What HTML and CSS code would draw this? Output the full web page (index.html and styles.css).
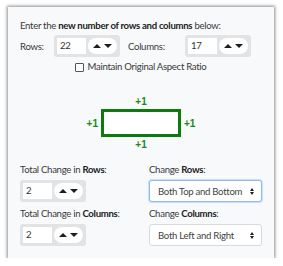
FILE: index.html
```html
<!DOCTYPE html>
<html>
<head>
<meta charset="utf-8">
<link rel="stylesheet" href="styles.css">
</head>
<body>
<div class="panel">
  <div class="intro">Enter the <b>new number of rows and columns</b> below:</div>
  <div class="dims">
    <span class="lbl lbl-rows">Rows:</span>
    <div class="spin">
      <span class="num">22</span>
      <span class="pill"><span class="up"></span><span class="down"></span></span>
    </div>
    <span class="lbl lbl-cols">Columns:</span>
    <div class="spin">
      <span class="num">17</span>
      <span class="pill"><span class="up"></span><span class="down"></span></span>
    </div>
  </div>
  <div class="aspect"><span class="cb"></span>Maintain Original Aspect Ratio</div>
  <div class="diagram">
    <div class="plus">+1</div>
    <div class="mid">
      <span class="plus">+1</span>
      <div class="rect"></div>
      <span class="plus">+1</span>
    </div>
    <div class="plus">+1</div>
  </div>
  <div class="grid">
    <div class="cell">
      <div class="glabel">Total Change in <b>Rows</b>:</div>
      <div class="spin">
        <span class="num">2</span>
        <span class="pill"><span class="up"></span><span class="down"></span></span>
      </div>
    </div>
    <div class="cell">
      <div class="glabel">Change <b>Rows</b>:</div>
      <div class="select focus"><span>Both Top and Bottom</span><span class="arr"><span class="up"></span><span class="down"></span></span></div>
    </div>
    <div class="cell">
      <div class="glabel">Total Change in <b>Columns</b>:</div>
      <div class="spin">
        <span class="num">2</span>
        <span class="pill"><span class="up"></span><span class="down"></span></span>
      </div>
    </div>
    <div class="cell">
      <div class="glabel">Change <b>Columns</b>:</div>
      <div class="select"><span>Both Left and Right</span><span class="arr"><span class="up"></span><span class="down"></span></span></div>
    </div>
  </div>
</div>
</body>
</html>
```
FILE: styles.css
```css
* { box-sizing: border-box; }
body {
  margin: 0;
  background: #ffffff;
  font-family: Lato, "Noto Sans", sans-serif;
  color: #3a3a3a;
}
.panel {
  margin: 7px 0 0 8px;
  width: 266px;
  height: 251px;
  background: #f8f9fa;
  box-shadow: 0 0 3px 1px rgba(0,0,0,0.45);
  padding: 12px 12px 0 12px;
  font-size: 9.6px;
  letter-spacing: -0.3px;
}
.intro {
  line-height: 14px;
  white-space: nowrap;
}
.intro b { font-weight: 700; color: #222; }
.dims {
  display: flex;
  align-items: center;
  margin-top: 2px;
}
.lbl-rows { width: 34px; }
.lbl-cols { width: 57px; margin-left: 8px; }
.spin {
  display: flex;
  align-items: center;
  gap: 2px;
  width: 66px;
  height: 22px;
  padding: 3px;
  background: #e2e3e4;
  border-radius: 3px;
}
.num {
  width: 29px;
  height: 16px;
  background: #fff;
  line-height: 16px;
  padding-left: 3px;
  color: #333;
}
.pill {
  width: 29px;
  height: 16px;
  background: #fff;
  border-radius: 8px;
  display: flex;
  align-items: center;
  justify-content: center;
  gap: 3px;
}
.up {
  width: 0; height: 0;
  border-left: 4px solid transparent;
  border-right: 4px solid transparent;
  border-bottom: 4px solid #1e1e1e;
}
.down {
  width: 0; height: 0;
  border-left: 4px solid transparent;
  border-right: 4px solid transparent;
  border-top: 4px solid #1e1e1e;
}
.aspect {
  display: flex;
  align-items: center;
  justify-content: center;
  margin-top: 3px;
  line-height: 14px;
}
.cb {
  width: 9px;
  height: 9px;
  border: 1px solid #555;
  border-radius: 1px;
  background: #fff;
  margin-right: 3px;
}
.diagram {
  display: flex;
  flex-direction: column;
  align-items: center;
  margin-top: 22px;
}
.plus {
  color: #1a8a1a;
  font-weight: 700;
  font-size: 10px;
  line-height: 11px;
  letter-spacing: 0;
  font-family: "Liberation Sans", sans-serif;
}
.mid {
  display: flex;
  align-items: center;
  gap: 3px;
  margin: 2px 0;
}
.rect {
  width: 80px;
  height: 28px;
  border: 3px solid #0e7a0e;
  background: #fff;
}
.grid {
  display: grid;
  grid-template-columns: 129px 113px;
  row-gap: 5px;
  margin-top: 13px;
}
.glabel {
  line-height: 14px;
  margin-bottom: 3px;
  white-space: nowrap;
}
.glabel b { font-weight: 700; color: #222; }
.select {
  width: 113px;
  height: 22px;
  border: 1px solid #d6dadf;
  border-radius: 3px;
  background: #fff;
  display: flex;
  align-items: center;
  justify-content: space-between;
  padding: 0 7px 0 8px;
  color: #444;
  white-space: nowrap;
}
.select.focus {
  border-color: #8fbdf2;
  box-shadow: 0 0 0 1px rgba(120,170,240,0.35);
}
.arr {
  display: flex;
  flex-direction: column;
  gap: 1px;
}
.arr .up { border-left-width: 2.5px; border-right-width: 2.5px; border-bottom-width: 3px; }
.arr .down { border-left-width: 2.5px; border-right-width: 2.5px; border-top-width: 3px; }
```
